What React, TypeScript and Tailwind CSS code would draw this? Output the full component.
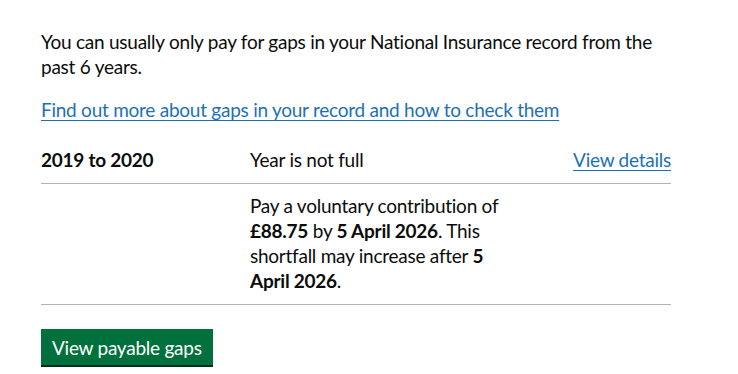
import React from "react";

export default function App() {
  return (
    <div className="min-h-[374px] w-[738px] bg-white pt-[30px] pl-[41px] text-[#0b0c0c] tracking-[-0.25px]" style={{ fontFamily: 'Lato, "Liberation Sans", Arial, sans-serif' }}>
      <div className="w-[630px]">
        <p className="text-[19px] leading-[25px] mb-[18px] -mt-px">
          You can usually only pay for gaps in your National Insurance record from the past 6 years.
        </p>
        <p className="text-[19px] leading-[25px] mb-[16px]">
          <a href="#" className="text-[#1d70b8] underline decoration-1 underline-offset-[3px]">
            Find out more about gaps in your record and how to check them
          </a>
        </p>
        <div className="text-[19px] leading-[25px]">
          <div className="flex border-b border-[#b1b4b6] pt-[9px] pb-[11px]">
            <div className="w-[209px] font-bold">2019 to 2020</div>
            <div className="w-[265px]">Year is not full</div>
            <div className="flex-1 text-right">
              <a href="#" className="text-[#1d70b8] underline decoration-1 underline-offset-[3px]">View details</a>
            </div>
          </div>
          <div className="flex border-b border-[#b1b4b6] pt-[9px] pb-[11px]">
            <div className="w-[209px]"></div>
            <div className="w-[260px]">
              Pay a voluntary contribution of <strong>£88.75</strong> by <strong>5 April 2026</strong>. This shortfall may increase after <strong>5 April 2026</strong>.
            </div>
            <div className="flex-1"></div>
          </div>
        </div>
        <button className="mt-[24px] h-[36px] px-[11px] bg-[#00703c] text-white text-[19px] leading-[19px] shadow-[0_2px_0_#002d18]">
          View payable gaps
        </button>
      </div>
    </div>
  );
}
